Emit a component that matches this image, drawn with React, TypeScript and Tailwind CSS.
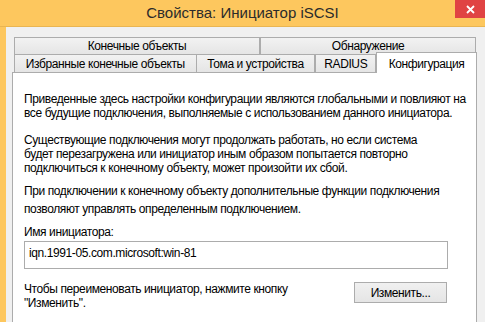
import React from 'react';

const tabBase =
  'flex items-center justify-center border border-[#acacac] bg-gradient-to-b from-[#f2f2f2] to-[#e5e5e5] text-[12px] text-black';

const App: React.FC = () => {
  return (
    <div
      className="w-[485px] h-[322px] overflow-hidden bg-[#fdc75e] flex flex-col tracking-[-0.4px]"
      style={{ fontFamily: '"Liberation Sans", Arial, sans-serif' }}
    >
      {/* title bar */}
      <div className="relative h-[27px] shrink-0 flex items-center justify-center border-b border-[#e9b552]">
        <span className="text-[15px] text-[#2b2b2b] leading-none -mt-[2px] tracking-normal">
          Свойства: Инициатор iSCSI
        </span>
        <button className="absolute top-0 right-0 w-[30px] h-[18px] bg-[#e04343] flex items-center justify-center">
          <svg width="9" height="9" viewBox="0 0 9 9">
            <path d="M1 1 L8 8 M8 1 L1 8" stroke="#fff" strokeWidth="1.8" />
          </svg>
        </button>
      </div>

      {/* dialog body */}
      <div className="flex-1 ml-[6px] bg-[#f0f0f0] pl-[6px] pt-[10px]">
        <div className="w-[465px]">
          {/* back row */}
          <div className="flex pl-[2px] h-[17px]">
            <div className={`${tabBase} w-[246px] border-b-0`}>Конечные объекты</div>
            <div className={`${tabBase} w-[216px] border-b-0`}>Обнаружение</div>
          </div>
          {/* front row */}
          <div className="flex pl-[2px] h-[18px] items-end">
            <div className={`${tabBase} w-[183px] h-[18px] border-b-0`}>Избранные конечные объекты</div>
            <div className={`${tabBase} w-[119px] h-[18px] border-b-0 border-l-0`}>Тома и устройства</div>
            <div className={`${tabBase} w-[61px] h-[18px] border-b-0`}>RADIUS</div>
            <div className="relative z-10 -mb-[1px] flex items-start justify-center pt-[2px] w-[101px] h-[21px] border border-b-0 border-[#acacac] bg-white text-[12px] text-black">
              Конфигурация
            </div>
          </div>

          {/* panel */}
          <div className="h-[260px] w-[465px] border border-[#acacac] bg-white pl-[11px] pr-[10px] pt-[19px] text-[12px] leading-[14px] text-black whitespace-nowrap">
            <p>
              Приведенные здесь настройки конфигурации являются глобальными и повлияют на
              <br />
              все будущие подключения, выполняемые с использованием данного инициатора.
            </p>
            <p className="mt-[13px]">
              Существующие подключения могут продолжать работать, но если система
              <br />
              будет перезагружена или инициатор иным образом попытается повторно
              <br />
              подключиться к конечному объекту, может произойти их сбой.
            </p>
            <div className="mt-[9px]">
              <p>При подключении к конечному объекту дополнительные функции подключения</p>
              <p className="mt-[4px]">позволяют управлять определенным подключением.</p>
            </div>
            <p className="mt-[9px]">Имя инициатора:</p>
            <div className="mt-[2px] w-[424px] h-[28px] border border-[#acacac] px-[4px] pt-[4px]">
              iqn.1991-05.com.microsoft:win-81
            </div>
            <div className="mt-[13px] flex">
              <p className="flex-1">
                Чтобы переименовать инициатор, нажмите кнопку
                <br />
                "Изменить".
              </p>
              <button className="w-[93px] h-[21px] mr-[19px] border border-[#acacac] bg-gradient-to-b from-[#f0f0f0] to-[#e5e5e5] text-[12px] text-black">
                Изменить...
              </button>
            </div>
          </div>
        </div>
      </div>
    </div>
  );
};

export default App;
